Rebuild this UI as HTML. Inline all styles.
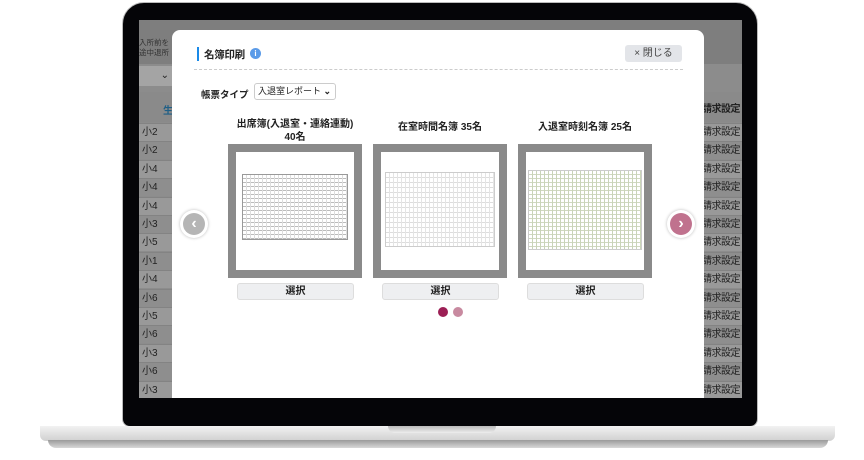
<!DOCTYPE html>
<html><head><meta charset="utf-8"><style>
*{margin:0;padding:0;box-sizing:border-box}
body{width:864px;height:460px;background:#fff;position:relative;overflow:hidden;font-family:"Liberation Sans","Noto Sans CJK JP",sans-serif;color:#222}
.a{position:absolute;white-space:nowrap}
.bezel{left:122px;top:2px;width:636px;height:425px;background:#050508;border-radius:22px 22px 8px 8px;border:1px solid #bbb}
.screen{left:139px;top:20px;width:603px;height:378px;background:#8c8c8c;overflow:hidden}
.row{position:absolute;left:0;width:603px;height:18px;font-size:10px;color:#222;line-height:18px}
.row span{position:absolute;left:3px}
.row b{position:absolute;right:2px;font-weight:normal;letter-spacing:-0.5px}
.modal{left:172px;top:30px;width:532px;height:368px;background:#fff;border-radius:8px 8px 0 0}
.card{width:134px;height:134px;background:#8a8a8a;padding:8px}
.card .in{width:100%;height:100%;background:#fff;position:relative}
.btn{width:117px;height:17px;background:#eeeff1;border:1px solid #ddd;border-radius:3px;font-size:10px;font-weight:bold;text-align:center;line-height:15px}
.ttl{font-size:10px;font-weight:bold;text-align:center;width:180px}
</style></head><body>
<div class="a bezel"></div>
<div class="a screen">
 <div class="a" style="left:0;top:0;width:603px;height:44px;background:#7e7e7e"></div>
 <div class="a" style="left:0;top:18px;font-size:7.5px;color:#333;line-height:10px">入所前を<br>途中退所</div>
 <div class="a" style="left:0;top:46px;width:33px;height:20px;background:#a4a4a4;font-size:10px;text-align:right;padding-right:3px;line-height:20px">⌄</div>
 <div class="a" style="left:0;top:72px;width:603px;height:30px;background:#8a8a8a"></div>
 <div class="a" style="left:24px;top:82px;font-size:10px;color:#1f5f86;font-weight:bold">生</div>
 <div class="a" style="left:563px;top:80px;font-size:10px;font-weight:bold;letter-spacing:-0.5px">請求設定</div>
 <div id="rows"></div>
</div>
<div class="a" style="left:40px;top:426px;width:795px;height:15px;background:linear-gradient(#f2f2f2,#d0d0d0);border-radius:0 0 6px 6px"></div>
<div class="a" style="left:48px;top:440px;width:780px;height:8px;background:linear-gradient(#9a9a9a,#d8d8d8);border-radius:0 0 30px 30px"></div>
<div class="a" style="left:388px;top:426px;width:108px;height:7px;background:linear-gradient(#bbb,#eee);border-radius:0 0 8px 8px"></div>
<div class="a modal">
 <div class="a" style="left:25px;top:17px;width:2px;height:14px;background:#1a8ae8"></div>
 <div class="a" style="left:32px;top:17px;font-size:10.5px;font-weight:bold;letter-spacing:-0.3px">名簿印刷</div>
 <div class="a" style="left:78px;top:18px;width:11px;height:11px;border-radius:50%;background:#5b9be8;color:#fff;font-size:8px;text-align:center;line-height:11px;font-weight:bold">i</div>
 <div class="a" style="left:453px;top:15px;width:57px;height:17px;background:#e3e5e9;border-radius:3px;font-size:10px;color:#444;text-align:center;line-height:17px">× 閉じる</div>
 <div class="a" style="left:22px;top:39px;width:489px;border-top:1px dashed #ccc"></div>
 <div class="a" style="left:29px;top:57px;font-size:9.5px;font-weight:bold">帳票タイプ</div>
 <div class="a" style="left:82px;top:53px;width:82px;height:17px;border:1px solid #ccc;border-radius:3px;font-size:9px;line-height:15px;padding-left:3px">入退室レポート<span style="position:absolute;right:4px;font-weight:bold">⌄</span></div>
 <div class="a ttl" style="left:33px;top:88px;line-height:13px">出席簿(入退室・連絡連動)<br>40名</div>
 <div class="a ttl" style="left:178px;top:88px">在室時間名簿 35名</div>
 <div class="a ttl" style="left:323px;top:88px">入退室時刻名簿 25名</div>
 <div class="a card" style="left:56px;top:114px"><div class="in">
  <div class="a" style="left:6px;top:22px;width:106px;height:66px;background:repeating-linear-gradient(90deg,transparent 0 3px,#ddd 3px 4px),repeating-linear-gradient(transparent 0 3px,#bbb 3px 4px);border:1px solid #999"></div></div></div>
 <div class="a card" style="left:201px;top:114px"><div class="in">
  <div class="a" style="left:4px;top:20px;width:110px;height:75px;background:repeating-linear-gradient(90deg,transparent 0 3px,#e4e4e4 3px 4px),repeating-linear-gradient(transparent 0 4px,#ddd 4px 5px);border:1px solid #ccc"></div></div></div>
 <div class="a card" style="left:346px;top:114px"><div class="in">
  <div class="a" style="left:2px;top:18px;width:114px;height:80px;background:repeating-linear-gradient(90deg,transparent 0 3px,#c9d4b8 3px 4px),repeating-linear-gradient(transparent 0 3px,#d0d8c0 3px 4px);border:1px solid #ccc"></div></div></div>
 <div class="a btn" style="left:65px;top:253px">選択</div>
 <div class="a btn" style="left:210px;top:253px">選択</div>
 <div class="a btn" style="left:355px;top:253px">選択</div>
 <div class="a" style="left:266px;top:277px;width:10px;height:10px;border-radius:50%;background:#9c1f55"></div>
 <div class="a" style="left:281px;top:277px;width:10px;height:10px;border-radius:50%;background:#c88aa0"></div>
</div>
<div class="a" style="left:180px;top:210px;width:28px;height:28px;border-radius:50%;background:#fff;box-shadow:0 0 3px #bbb"><div class="a" style="left:3px;top:3px;width:22px;height:22px;border-radius:50%;background:#b5b5b5;color:#fff;font-size:16px;font-weight:bold;text-align:center;line-height:22px">‹</div></div>
<div class="a" style="left:667px;top:210px;width:28px;height:28px;border-radius:50%;background:#fff;box-shadow:0 0 3px #bbb"><div class="a" style="left:3px;top:3px;width:22px;height:22px;border-radius:50%;background:#c0728e;color:#fff;font-size:16px;font-weight:bold;text-align:center;line-height:22px">›</div></div>
<script>
var l=["小2","小2","小4","小4","小4","小3","小5","小1","小4","小6","小5","小6","小3","小6","小3"],h="";
for(var i=0;i<15;i++){h+='<div class="row" style="top:'+(103+i*18.4)+'px;background:'+(i%2?'#8e8e8e':'#999')+';border-top:1px solid #838383"><span>'+l[i]+'</span><b>請求設定</b></div>'}
document.getElementById("rows").innerHTML=h;
</script>
</body></html>
